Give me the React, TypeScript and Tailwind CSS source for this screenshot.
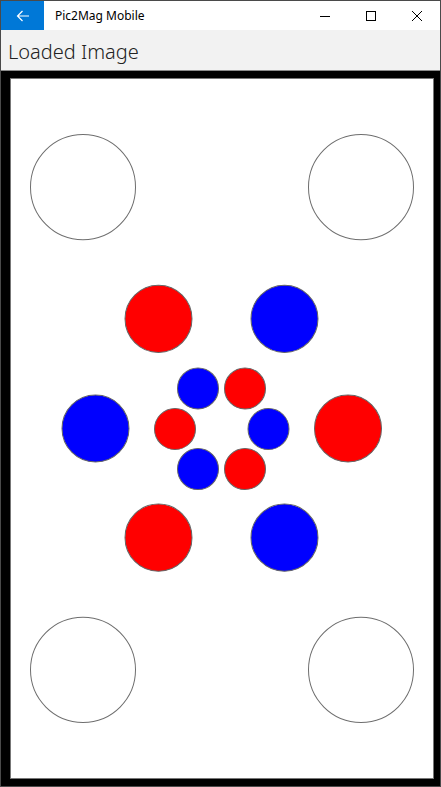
import React from 'react';

const outline = [
  { cx: 83, cy: 188 },
  { cx: 361, cy: 188 },
  { cx: 83, cy: 670 },
  { cx: 361, cy: 670 },
];

const dots = [
  // big ring
  { cx: 158.5, cy: 319.5, r: 33.5, fill: '#ff0000' },
  { cx: 284.5, cy: 319.5, r: 33.5, fill: '#0000ff' },
  { cx: 95.5, cy: 429, r: 33.5, fill: '#0000ff' },
  { cx: 348, cy: 429, r: 33.5, fill: '#ff0000' },
  { cx: 158.5, cy: 538, r: 33.5, fill: '#ff0000' },
  { cx: 284.5, cy: 538, r: 33.5, fill: '#0000ff' },
  // small ring
  { cx: 198, cy: 389, r: 20.5, fill: '#0000ff' },
  { cx: 245, cy: 389, r: 20.5, fill: '#ff0000' },
  { cx: 175, cy: 429.5, r: 20.5, fill: '#ff0000' },
  { cx: 268.5, cy: 429.5, r: 20.5, fill: '#0000ff' },
  { cx: 198, cy: 469.5, r: 20.5, fill: '#0000ff' },
  { cx: 245, cy: 469.5, r: 20.5, fill: '#ff0000' },
];

const TitleBar: React.FC = () => (
  <div className="flex h-[29px] items-stretch bg-white">
    <div className="flex w-[43px] items-center justify-center bg-[#0078d7]">
      <svg width="14" height="12" viewBox="0 0 14 12" fill="none" stroke="white" strokeWidth="1.2">
        <path d="M13 6H1.5M6.5 1 1.5 6l5 5" />
      </svg>
    </div>
    <div className="flex items-center pl-[11px] text-[12px] text-black" style={{ fontFamily: '"Noto Sans", sans-serif' }}>
      Pic2Mag Mobile
    </div>
    <div className="ml-auto flex items-stretch">
      <div className="flex w-[46px] items-center justify-center">
        <svg width="10" height="10" viewBox="0 0 10 10" stroke="#000" strokeWidth="1">
          <path d="M0 5.5h10" />
        </svg>
      </div>
      <div className="flex w-[46px] items-center justify-center">
        <svg width="10" height="10" viewBox="0 0 10 10" fill="none" stroke="#000" strokeWidth="1">
          <rect x="0.5" y="0.5" width="9" height="9" />
        </svg>
      </div>
      <div className="flex w-[46px] items-center justify-center">
        <svg width="10" height="10" viewBox="0 0 10 10" stroke="#000" strokeWidth="1">
          <path d="M0 0l10 10M10 0 0 10" />
        </svg>
      </div>
    </div>
  </div>
);

const App: React.FC = () => {
  return (
    <div className="flex h-[787px] w-[441px] flex-col overflow-hidden border border-[#4a4a4a] bg-black">
      <TitleBar />

      {/* Page header */}
      <div className="flex h-[41px] items-center bg-[#f2f2f2] pl-[7px] pt-[3px] border-b border-[#8a8a8a]">
        <span className="text-[20px] font-light leading-none text-[#222]" style={{ fontFamily: '"Noto Sans", sans-serif' }}>
          Loaded Image
        </span>
      </div>

      {/* Image frame */}
      <div className="flex flex-1 pl-[9px] pr-[6px] pt-[7px] pb-[7px]">
        <div className="flex-1 border border-[#777] bg-white">
          <svg className="block h-full w-full" viewBox="11 80 422 698" preserveAspectRatio="none">
            {outline.map((c, i) => (
              <circle key={i} cx={c.cx} cy={c.cy} r={52.5} fill="white" stroke="#6e6e6e" strokeWidth="1" />
            ))}
            {dots.map((d, i) => (
              <circle key={i} cx={d.cx} cy={d.cy} r={d.r} fill={d.fill} stroke="#666" strokeWidth="1" />
            ))}
          </svg>
        </div>
      </div>
    </div>
  );
};

export default App;
